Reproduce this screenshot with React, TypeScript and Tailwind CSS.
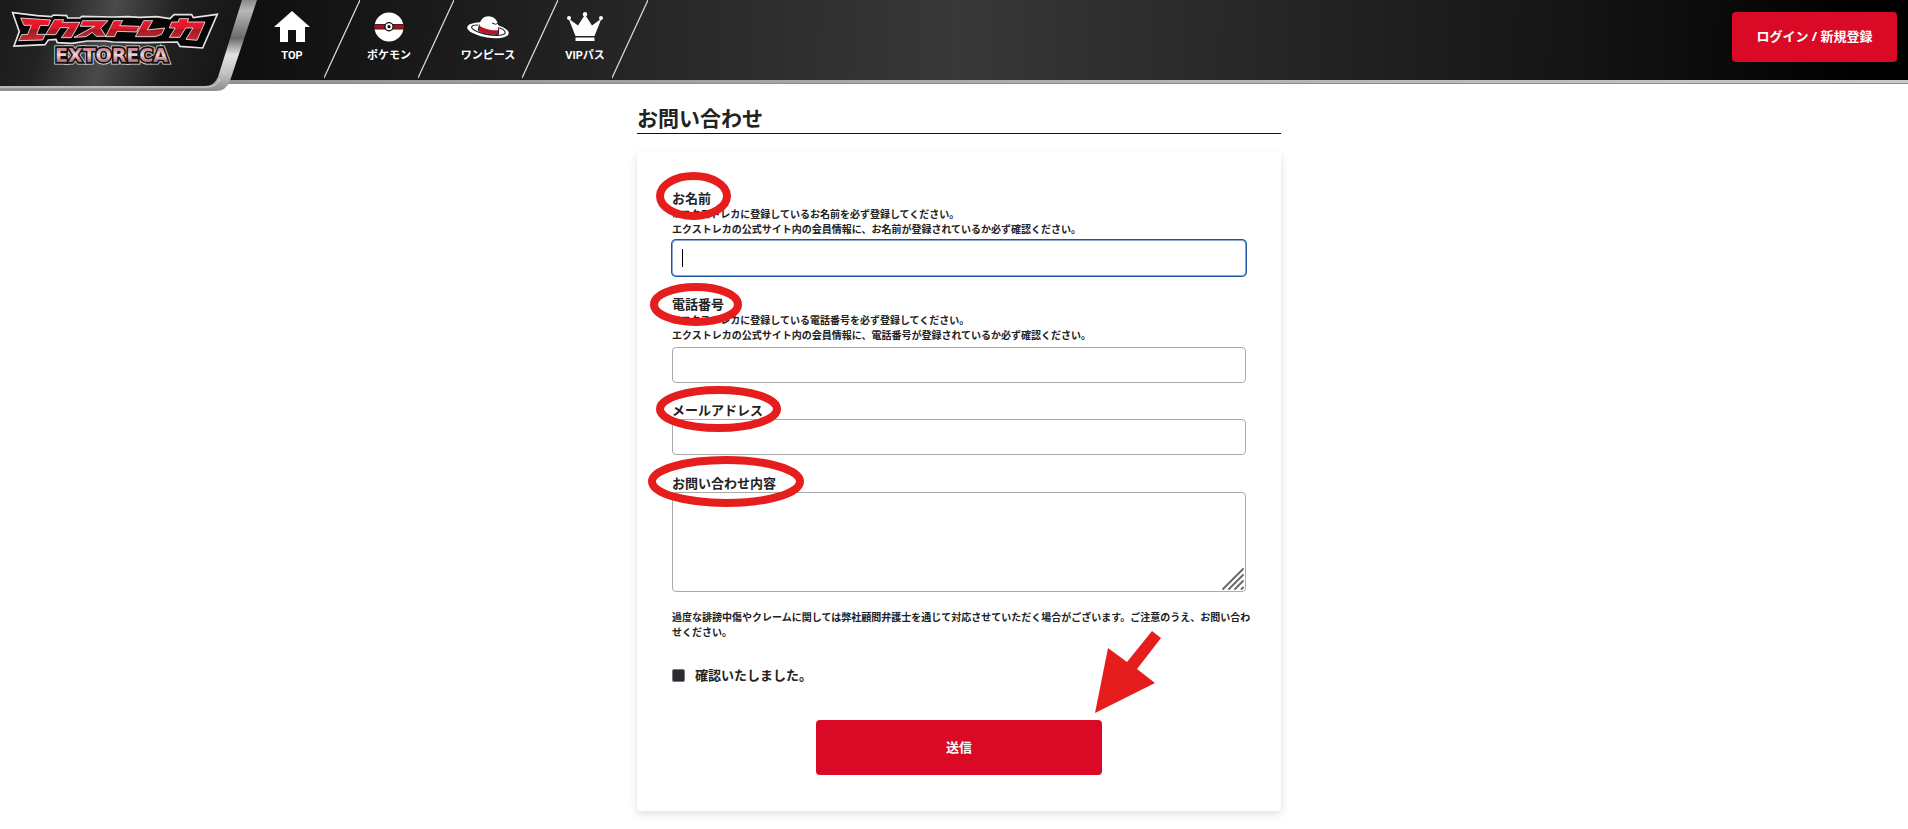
import React, { ReactNode } from "react";

function HomeIcon() {
  return (
    <svg width="36" height="32" viewBox="0 0 36 32" fill="#fff" aria-hidden="true">
      <path d="M18 0 L36 16 H31 V31 H22 V19 H14 V31 H6 V16 H0 Z" />
    </svg>
  );
}

function BallIcon() {
  return (
    <svg width="30" height="30" viewBox="0 0 30 30" aria-hidden="true">
      <circle cx="15" cy="15" r="14.5" fill="#fff" />
      <rect x="0" y="12" width="30" height="5.5" fill="#222" />
      <rect x="0.5" y="12.7" width="29" height="4" fill="#a3151c" />
      <circle cx="15" cy="14.7" r="4.7" fill="#111" />
      <circle cx="15" cy="14.7" r="3.4" fill="#fff" />
      <circle cx="15" cy="14.7" r="1.6" fill="#111" />
    </svg>
  );
}

function HatIcon() {
  return (
    <svg width="42" height="23" viewBox="0 0 42 23" aria-hidden="true">
      <ellipse cx="21" cy="14.3" rx="21" ry="7.3" fill="#fff" transform="rotate(9 21 14.3)" />
      <path d="M11 9 C4 8.5 2.5 11.5 8 14.5 C16 19 30 20.5 36.5 18.5 C40 17 38 13.5 32.5 12" fill="none" stroke="#222" strokeWidth="1.1" />
      <path d="M11.5 14 C12 6 15 0 21.8 0.2 C29 0.5 32.5 7 31.5 17.5 C25 19.5 15 18 11.5 14 Z" fill="#fff" />
      <path d="M12.2 9.5 C17 13.3 26 15 31.7 14 L31.4 18 C24 19 15 17.3 11.4 14 Z" fill="#c1121f" />
      <path d="M12.4 8.5 L11.2 14.3 C16 18.3 25 19.7 31.5 18.3 L31.8 11" fill="none" stroke="#222" strokeWidth="1" />
      <path d="M25 7 L28.5 8.3 L30.8 7.3" fill="none" stroke="#222" strokeWidth="1" />
    </svg>
  );
}

function CrownIcon() {
  return (
    <svg width="36" height="30" viewBox="0 0 36 30" fill="#fff" aria-hidden="true">
      <circle cx="2" cy="6" r="2" />
      <circle cx="18" cy="2.2" r="2.2" />
      <circle cx="34" cy="6" r="2" />
      <path d="M1.5 6.5 L11 13.5 L18 2.5 L25 13.5 L34.5 6.5 L27.5 24 H8.5 Z" />
      <rect x="8.5" y="25.5" width="19" height="3.5" />
    </svg>
  );
}

function NavItem({ icon, children, width }: { icon: ReactNode; children: ReactNode; width: string }) {
  return (
    <a href="#" className={`flex h-20 shrink-0 flex-col items-center pt-[11px] ${width}`}>
      <span className="flex h-8 items-center">{icon}</span>
      <span className="mt-[5px] text-[11px] leading-4 font-bold whitespace-nowrap text-white">{children}</span>
    </a>
  );
}

function Divider() {
  return (
    <svg className="h-20 w-9 shrink-0" viewBox="0 0 36 80" aria-hidden="true">
      <path d="M36 0 L0 78" stroke="#ddd" strokeWidth="1.2" />
    </svg>
  );
}

const LOGO_STROKES = [
  "M62 54 L152 60 L145 77 L121 76 L110 103 L136 103 L128 120 L56 122 L65 104 L83 103 L94 76 L72 76 Z",
  "M163 59 L191 59 L187 67 L240 67 L214 113 L184 113 L206 83 L181 83 L167 104 L137 104 Z",
  "M248 62 L324 62 L302 85 L318 109 L288 109 L277 97 L258 110 L222 112 L284 79 L241 79 Z",
  "M341 62 L368 62 L359 77 L418 79 L410 96 L351 94 L344 110 L317 110 Z",
  "M431 62 L458 62 L442 90 L494 84 L485 103 L466 110 L406 110 Z",
  "M538 56 L566 56 L562 66 L615 66 L591 121 L558 118 L579 84 L557 84 L540 112 L508 112 L526 84 L508 84 L515 66 L535 66 Z",
];

function Logo() {
  return (
    <svg className="block" width="260" height="92" viewBox="0 0 260 92" role="img" aria-label="エクストレカ EXTORECA">
      <defs>
        <linearGradient id="panel" x1="0" x2="1" y1="0" y2="0.1">
          <stop offset="0" stopColor="#191919" />
          <stop offset="0.22" stopColor="#232323" />
          <stop offset="0.48" stopColor="#4a4a4a" />
          <stop offset="0.75" stopColor="#202020" />
          <stop offset="1" stopColor="#161616" />
        </linearGradient>
        <linearGradient id="metal" x1="0" x2="0" y1="0" y2="1">
          <stop offset="0" stopColor="#8a8a8a" />
          <stop offset="0.12" stopColor="#b8b8b8" />
          <stop offset="0.42" stopColor="#6a6a6a" />
          <stop offset="0.6" stopColor="#e2e2e2" />
          <stop offset="0.8" stopColor="#c4c4c4" />
          <stop offset="1" stopColor="#8c8c8c" />
        </linearGradient>
        <linearGradient id="red" x1="0" x2="0" y1="54" y2="122" gradientUnits="userSpaceOnUse">
          <stop offset="0" stopColor="#f5162e" />
          <stop offset="0.45" stopColor="#e0182a" />
          <stop offset="0.55" stopColor="#a51a22" />
          <stop offset="1" stopColor="#cf2a33" />
        </linearGradient>
        <linearGradient id="pink" x1="0" x2="0" y1="49" y2="62" gradientUnits="userSpaceOnUse">
          <stop offset="0" stopColor="#c98790" />
          <stop offset="0.45" stopColor="#f3d3d8" />
          <stop offset="1" stopColor="#b5606d" />
        </linearGradient>
      </defs>
      <path d="M0 0 H257 L230 81 Q226 91 216 91 H0 Z" fill="url(#metal)" />
      <path d="M0 0 H242 L218 77 Q214 86 205 86 H0 Z" fill="url(#panel)" />
      <path d="M0 87 H208 Q216 87 220 79" fill="none" stroke="#d8d8d8" />
      <g transform="scale(0.3333)">
        <path
          d="M38 38 L112 47 L155 50 L160 45 L200 47 L203 54 L240 54 L246 49 L335 51 L383 50 L420 52 L470 50 L510 56 L522 44 L575 44 L580 53 L652 43 L608 144 L540 139 L532 126 L440 128 L405 128 L340 126 L316 123 L262 123 L215 130 L172 128 L168 118 L145 120 L135 134 L42 138 L58 95 Z"
          fill="#050505"
          stroke="#e4e4e4"
          strokeWidth="5"
        />
        {LOGO_STROKES.map((d) => (
          <path key={d} d={d} fill="url(#red)" stroke="#eee" strokeWidth="2.5" />
        ))}
      </g>
      <g fontSize="19" fontWeight="700" fontFamily="DejaVu Sans, sans-serif" strokeLinejoin="miter">
        <text x="55" y="62" stroke="#ddd" strokeWidth="5" fill="#ddd" aria-hidden="true">EXTORECA</text>
        <text x="55" y="62" stroke="#111" strokeWidth="3.4" fill="#111" aria-hidden="true">EXTORECA</text>
        <text x="55" y="62" fill="url(#pink)">EXTORECA</text>
      </g>
    </svg>
  );
}

function Ring({ w, h, place }: { w: number; h: number; place: string }) {
  return (
    <svg aria-hidden="true" width={w} height={h} className={`pointer-events-none absolute z-10 ${place}`}>
      <ellipse cx={w / 2} cy={h / 2} rx={w / 2 - 4} ry={h / 2 - 4} fill="none" stroke="#e51d1d" strokeWidth="8" />
    </svg>
  );
}

const field = "block w-full rounded-[4px] border border-[#aaa] bg-white px-2.5 text-sm outline-none focus:border-[#8fa6cc] focus:ring-1 focus:ring-[#1d549f]";
const label = "relative z-20 block w-fit text-[13px] leading-[18px]";

export default function App() {
  return (
    <div className="min-h-screen bg-white font-['Noto_Sans','Noto_Sans_CJK_JP',sans-serif] font-bold text-[#222]">
      <header className="flex h-[92px] items-start">
        <div className="z-10 -mr-[260px] shrink-0">
          <Logo />
        </div>
        <div className="min-w-0 flex-1">
          <div className="flex h-20 items-start bg-[linear-gradient(91deg,#0a0a0a_8%,#383838_50%,#141414_83%,#000_98%)] pl-[260px]">
            <nav aria-label="メイン" className="flex font-['Roboto','Noto_Sans_CJK_JP',sans-serif]">
              <NavItem icon={<HomeIcon />} width="w-16">TOP</NavItem>
              <Divider />
              <NavItem icon={<BallIcon />} width="w-[58px]">ポケモン</NavItem>
              <Divider />
              <NavItem icon={<HatIcon />} width="w-[68px]">ワンピース</NavItem>
              <Divider />
              <NavItem icon={<CrownIcon />} width="w-[54px]">VIPパス</NavItem>
              <Divider />
            </nav>
            <button className="mt-3 mr-[11px] ml-auto h-[50px] w-[165px] shrink-0 rounded-[4px] bg-[#da0926] text-[13px] text-white">
              ログイン / 新規登録
            </button>
          </div>
          <div className="h-1 border-b border-[#8c8c8c] bg-linear-to-r from-[#8c8c8c] to-[#cacaca]" />
        </div>
      </header>

      <main className="mx-auto w-full max-w-[654px] pt-3 pl-2.5">
        <h1 className="border-b border-[#111] text-[21px] leading-[29px]">お問い合わせ</h1>
        <form className="mt-[18px] flex flex-col rounded-[4px] bg-white px-[35px] pt-[37px] pb-9 shadow-[0_3px_8px_rgba(0,0,0,0.13)]" onSubmit={(e) => e.preventDefault()}>
          <div className="relative">
            <Ring w={75} h={48} place="-top-[17px] -left-4" />
            <label htmlFor="name" className={label}>お名前</label>
            <p className="text-[10px] leading-[15px]">
              ※エクストレカに登録しているお名前を必ず登録してください。<br />
              エクストレカの公式サイト内の会員情報に、お名前が登録されているか必ず確認ください。
            </p>
            <div className="relative mt-[3px]">
              <input id="name" autoFocus className={`peer h-9 caret-transparent ${field}`} />
              <span aria-hidden="true" className="pointer-events-none absolute top-[9px] left-2.5 hidden h-[18px] w-px bg-black peer-focus:block" />
            </div>
          </div>
          <div className="relative mt-[19px]">
            <Ring w={92} h={43} place="-top-3 -left-[22px]" />
            <label htmlFor="tel" className={label}>電話番号</label>
            <p className="text-[10px] leading-[15px]">
              ※エクストレカに登録している電話番号を必ず登録してください。<br />
              エクストレカの公式サイト内の会員情報に、電話番号が登録されているか必ず確認ください。
            </p>
            <input id="tel" type="tel" className={`mt-1 h-9 ${field}`} />
          </div>
          <div className="relative mt-[18px]">
            <Ring w={125} h={46} place="-top-[15px] -left-4" />
            <label htmlFor="email" className={label}>メールアドレス</label>
            <input id="email" type="email" className={`h-9 ${field}`} />
          </div>
          <div className="relative mt-[19px]">
            <Ring w={156} h={51} place="-top-[18px] -left-6" />
            <label htmlFor="message" className={label}>お問い合わせ内容</label>
            <div className="relative">
              <textarea id="message" className={`h-[100px] resize-none py-2 ${field}`} />
              <svg className="pointer-events-none absolute right-0.5 bottom-0.5" width="22" height="22" viewBox="0 0 22 22" stroke="#666" strokeWidth="1.8" strokeLinecap="round" aria-hidden="true">
                <path d="M1 21 L21 1 M7 21 L21 7 M13 21 L21 13 M19.5 21 L21 19.5" />
              </svg>
            </div>
          </div>
          <p className="mt-[18px] -mr-2 text-[10px] leading-[15px]">
            過度な誹謗中傷やクレームに関しては弊社顧問弁護士を通じて対応させていただく場合がございます。ご注意のうえ、お問い合わせください。
          </p>
          <label className="mt-[26px] flex w-fit items-center gap-2.5 text-[13px] leading-[18px]">
            <input type="checkbox" className="size-[13px] appearance-none rounded-[2px] border border-[#777] bg-[#2b2a33] checked:bg-[#da0926]" />
            確認いたしました。
          </label>
          <div className="relative mt-9 w-[286px] self-center">
            <button type="submit" className="h-[55px] w-full rounded-[4px] bg-[#da0926] text-[13px] text-white">送信</button>
            <svg className="pointer-events-none absolute -top-[89px] -right-[59px]" width="66" height="82" viewBox="0 0 66 82" fill="#e51d1d" aria-hidden="true">
              <path d="M57 0 L66 7 L42 38 L60 52 L0 82 L13 17 L32 31 Z" />
            </svg>
          </div>
        </form>
      </main>
    </div>
  );
}
